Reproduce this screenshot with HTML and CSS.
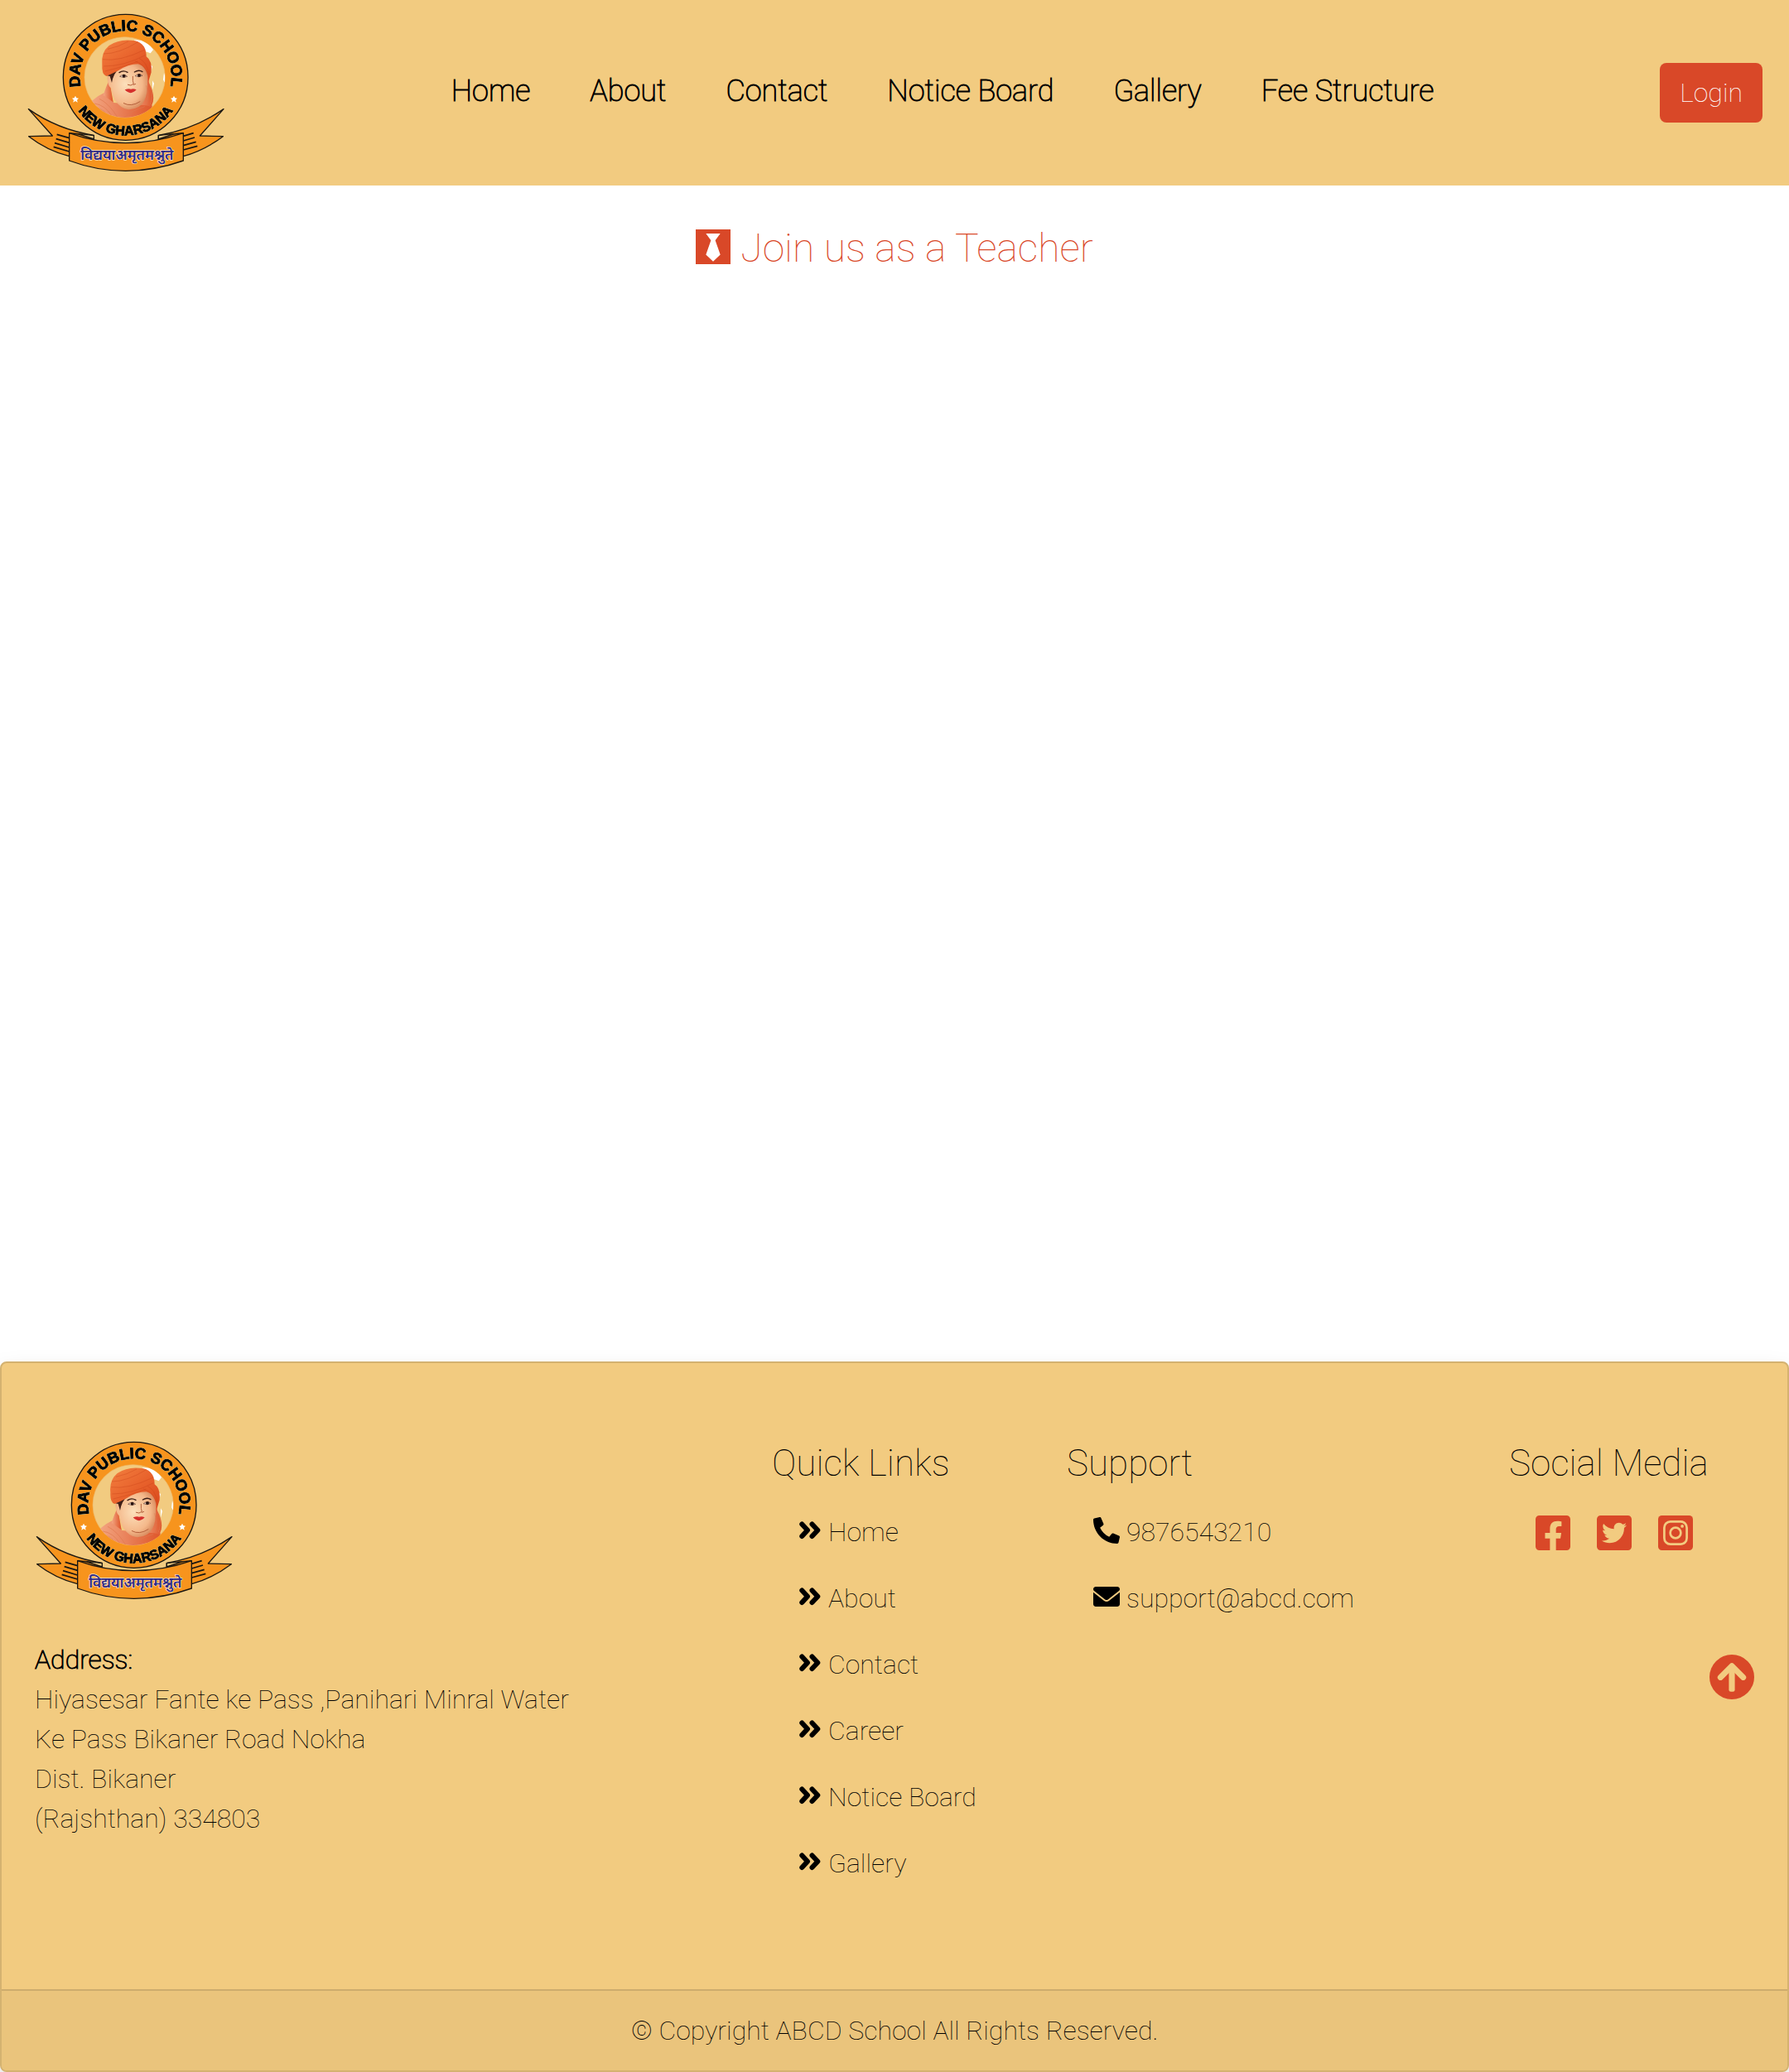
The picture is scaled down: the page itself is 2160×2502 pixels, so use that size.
FILE: index.html
```html
<!DOCTYPE html>
<html lang="en">
<head>
<meta charset="utf-8">
<meta name="viewport" content="width=device-width, initial-scale=1">
<title>ABCD School - Career</title>
<link rel="stylesheet" href="styles.css">
</head>
<body>
<header class="navbar">
  <a class="brand" href="#" aria-label="DAV Public School">
    <svg class="logo" viewBox="36 48 720 576">
      <defs>
        <linearGradient id="turban" x1="0" y1="0" x2="1" y2="1">
          <stop offset="0" stop-color="#f2803f"/><stop offset=".5" stop-color="#e8622c"/><stop offset="1" stop-color="#d9481c"/>
        </linearGradient>
        <radialGradient id="skin" cx=".45" cy=".45" r=".65">
          <stop offset="0" stop-color="#fce0bb"/><stop offset=".65" stop-color="#f4b88a"/><stop offset="1" stop-color="#cf7c50"/>
        </radialGradient>
        <linearGradient id="robe" x1="0" y1="0" x2="1" y2="0">
          <stop offset="0" stop-color="#f3a884"/><stop offset="1" stop-color="#dd5024"/>
        </linearGradient>
        <clipPath id="medallion"><circle cx="392" cy="280" r="146"/></clipPath>
        <path id="arc-top" d="M236 325A166 166 0 1 1 554 325"/>
        <path id="arc-bottom" d="M185 280A210 210 0 0 0 605 280"/>
      </defs>
      <g id="logo-art">
        <g fill="#f7941d" stroke="#1a1712" stroke-width="4" stroke-linejoin="round">
          <path d="M43 395Q150 470 280 490V505L191 566Q110 545 44 494L130 492Z"/>
          <path d="M750 395Q640 470 514 490V505L604 566Q680 545 748 494L664 492Z"/>
          <ellipse cx="395" cy="280" rx="226" ry="228"/>
          <path fill="#f2cb80" d="M191 482L225 486L280 504V491L250 487Z M604 482L568 486L514 504V491L545 487Z"/>
          <path d="M191 482Q290 518 395 518T604 482V582Q500 619 395 619T191 582Z"/>
        </g>
        <path fill="none" stroke="#1a1712" stroke-width="5" d="M146 487L191 500M143 503L191 517M138 518L191 534M134 532L191 549M641 482L604 493M645 498L604 510M650 514L604 527M655 529L604 543"/>
        <circle cx="392" cy="280" r="146" fill="#f2cb80" stroke="#eeb86a" stroke-width="2"/>
        <g clip-path="url(#medallion)">
          <path fill="#fff" d="M425 145Q470 140 495 180L485 193L465 185ZM480 230l12 10-6 24-8-12zM492 292l6 10-6 24zM534 264l3 10v25l-6-10z"/>
          <path fill="url(#robe)" d="M450 240Q475 250 480 300Q505 350 490 380L500 440H420Z"/>
          <path fill="url(#robe)" d="M262 375Q300 340 328 332L352 372L468 382Q505 385 510 440H262Z"/>
          <path fill="url(#robe)" d="M336 290Q325 310 314 345L350 370Z"/>
          <path fill="url(#skin)" d="M344 262Q322 270 330 295Q335 318 343 318Q346 345 356 362Q382 400 412 396Q450 392 462 365Q476 340 474 300V230H344Z"/>
          <path fill="#3f2018" d="M322 272L350 252L362 240L372 248Q350 266 345 300L338 276Z"/>
          <path fill="url(#turban)" d="M310 235Q305 190 335 165Q375 138 430 148Q470 158 470 205Q492 220 488 262L478 295Q474 240 440 232Q405 232 368 256Q345 268 325 276Q308 270 310 235Z"/>
          <path fill="none" stroke="#c8421a" stroke-opacity=".55" stroke-width="2" d="M312 215Q370 225 466 180M315 195Q370 195 440 152M316 240Q390 240 466 200M320 258Q385 244 440 222M330 178Q370 170 405 150M445 212Q472 225 480 270M430 222Q466 232 478 280"/>
          <path fill="none" stroke="#e07850" stroke-width="2" d="M282 375Q320 380 345 420M300 358Q335 375 365 424M275 385Q310 392 328 415M390 425Q420 398 465 386M470 310Q482 350 468 380M488 320Q496 350 484 378"/>
          <path fill="none" stroke="#3a1c14" stroke-width="4" stroke-linecap="round" d="M372 263Q386 253 402 262M427 261Q443 251 456 260"/>
          <path fill="#fff4e8" stroke="#5a2c1c" stroke-width="2" d="M374 277Q388 265 401 277Q388 284 374 277ZM430 275Q443 264 456 274Q443 282 430 275Z"/>
          <g fill="#2a1410"><circle cx="389" cy="275" r="6"/><circle cx="444" cy="273" r="6"/></g>
          <path fill="none" stroke="#b5603c" stroke-width="3" stroke-linecap="round" d="M421 277Q420 296 424 304Q414 313 403 307M424 307L431 304M388 374Q415 389 447 368"/>
          <path fill="#d52f2c" d="M392 325Q407 319 414 323Q423 319 434 325Q413 348 392 325Z"/>
        </g>
        <path fill="#fff" d="M213 347l4 8 8 1-6 6 2 9-8-5-8 5 2-9-6-6 8-1zM570 347l4 8 8 1-6 6 2 9-8-5-8 5 2-9-6-6 8-1z"/>
        <g class="logo-ring">
          <text font-size="56"><textPath href="#arc-top" startOffset="50%">DAV PUBLIC SCHOOL</textPath></text>
          <text font-size="48"><textPath href="#arc-bottom" startOffset="50%">NEW GHARSANA</textPath></text>
        </g>
        <text class="logo-motto" x="400" y="578" font-size="52">विद्ययाअमृतमश्नुते</text>
      </g>
    </svg>
  </a>
  <nav class="menu">
    <a href="#">Home</a>
    <a href="#">About</a>
    <a href="#">Contact</a>
    <a href="#">Notice Board</a>
    <a href="#">Gallery</a>
    <a href="#">Fee Structure</a>
  </nav>
  <button class="login" type="button">Login</button>
</header>

<main class="content">
  <h1 class="title">
    <svg class="icon-lg" viewBox="0 32 448 448" aria-hidden="true"><path fill="currentColor" d="M0 32v448h448V32H0zm316.500 325.200L224 445.900l-92.500-88.700 64.500-184-64.500-86.600h184.900L252 173.200l64.500 184z"/></svg>
    Join us as a Teacher
  </h1>
</main>

<footer class="footer">
  <div class="footer-body">
    <section class="about">
      <svg class="logo" viewBox="36 48 720 576" role="img" aria-label="DAV Public School"><use href="#logo-art"/></svg>
      <address><strong>Address:</strong><br>Hiyasesar Fante ke Pass ,Panihari Minral Water<br>Ke Pass Bikaner Road Nokha<br>Dist. Bikaner<br>(Rajshthan) 334803</address>
    </section>
    <section class="quick">
      <h2>Quick Links</h2>
      <ul>
        <li><a href="#"><svg class="icon-angle" viewBox="0 0 28 32" aria-hidden="true"><path id="angles" fill="none" stroke="currentColor" stroke-width="6" stroke-linecap="round" stroke-linejoin="round" d="M4.300 8.500L11 15.700L4.300 23M16.500 8.500L23.300 15.700L16.500 23"/></svg>Home</a></li>
        <li><a href="#"><svg class="icon-angle" viewBox="0 0 28 32" aria-hidden="true"><use href="#angles"/></svg>About</a></li>
        <li><a href="#"><svg class="icon-angle" viewBox="0 0 28 32" aria-hidden="true"><use href="#angles"/></svg>Contact</a></li>
        <li><a href="#"><svg class="icon-angle" viewBox="0 0 28 32" aria-hidden="true"><use href="#angles"/></svg>Career</a></li>
        <li><a href="#"><svg class="icon-angle" viewBox="0 0 28 32" aria-hidden="true"><use href="#angles"/></svg>Notice Board</a></li>
        <li><a href="#"><svg class="icon-angle" viewBox="0 0 28 32" aria-hidden="true"><use href="#angles"/></svg>Gallery</a></li>
      </ul>
    </section>
    <section class="support">
      <h2>Support</h2>
      <ul>
        <li><a href="tel:9876543210"><svg class="icon" viewBox="0 0 512 512" aria-hidden="true"><path fill="currentColor" d="M497.390 361.800l-112-48a24 24 0 0 0-28 6.900l-49.600 60.600A370.660 370.660 0 0 1 130.600 204.110l60.600-49.600a23.940 23.940 0 0 0 6.900-28l-48-112A24.160 24.160 0 0 0 122.600.610l-104 24A24 24 0 0 0 0 48c0 256.500 207.900 464 464 464a24 24 0 0 0 23.400-18.600l24-104a24.290 24.290 0 0 0-14.010-27.600z"/></svg>9876543210</a></li>
        <li><a href="mailto:support@abcd.com"><svg class="icon" viewBox="0 0 512 512" aria-hidden="true"><path fill="currentColor" d="M256 352c-16.530 0-33.060-5.422-47.160-16.410L0 173.200V400C0 426.500 21.490 448 48 448h416c26.510 0 48-21.490 48-48V173.200l-208.800 162.500C289.100 346.600 272.500 352 256 352zM16.290 145.300l212.200 165.100c16.190 12.600 38.870 12.600 55.060 0l212.200-165.100C505.100 137.300 512 125 512 112C512 85.490 490.500 64 464 64h-416C21.490 64 0 85.490 0 112C0 125 6.010 137.300 16.290 145.300z"/></svg>support@abcd.com</a></li>
      </ul>
    </section>
    <section class="social">
      <h2>Social Media</h2>
      <div class="social-links">
        <a href="#" aria-label="Facebook"><svg class="icon-lg" viewBox="0 32 448 448"><path fill="currentColor" d="M400 32H48A48 48 0 0 0 0 80v352a48 48 0 0 0 48 48h137.250V327.690h-63V256h63v-54.640c0-62.150 37-96.480 93.670-96.480 27.140 0 55.520 4.840 55.520 4.840v61h-31.270c-30.810 0-40.420 19.120-40.420 38.730V256h68.780l-11 71.690h-57.780V480H400a48 48 0 0 0 48-48V80a48 48 0 0 0-48-48z"/></svg></a>
        <a href="#" aria-label="Twitter"><svg class="icon-lg" viewBox="0 32 448 448"><path fill="currentColor" d="M400 32H48C21.500 32 0 53.500 0 80v352c0 26.500 21.500 48 48 48h352c26.500 0 48-21.500 48-48V80c0-26.500-21.500-48-48-48zm-48.900 158.800c.2 2.800.2 5.700.2 8.500 0 86.700-66 186.600-186.600 186.600-37.200 0-71.700-10.800-100.700-29.400 5.300.6 10.400.8 15.800.8 30.700 0 58.900-10.400 81.400-28-28.800-.6-53-19.500-61.300-45.500 10.100 1.500 19.200 1.500 29.600-1.200-30-6.100-52.500-32.500-52.500-64.400v-.8c8.700 4.900 18.900 7.900 29.600 8.300a65.447 65.447 0 0 1-29.200-54.600c0-12.200 3.200-23.400 8.900-33.100 32.300 39.800 80.800 65.800 135.200 68.600-9.300-44.500 24-80.600 64-80.600 18.900 0 35.900 7.900 47.900 20.700 14.800-2.800 29-8.300 41.600-15.800-4.900 15.200-15.200 28-28.800 36.100 13.200-1.400 26-5.100 37.800-10.200-8.900 13.100-20.100 24.700-32.900 34z"/></svg></a>
        <a href="#" aria-label="Instagram"><svg class="icon-lg" viewBox="0 0 448 448"><rect width="448" height="448" rx="48" fill="currentColor"/><g fill="none" stroke="#f2cb80" stroke-width="29"><rect x="79" y="79" width="290" height="290" rx="78"/><circle cx="224" cy="224" r="68"/></g><circle cx="310" cy="138" r="20" fill="#f2cb80"/></svg></a>
      </div>
    </section>
  </div>
  <div class="footer-bottom">© Copyright ABCD School All Rights Reserved.</div>
  <a class="to-top" href="#" aria-label="Back to top"><svg viewBox="0 0 512 512"><circle cx="256" cy="256" r="256" fill="currentColor"/><path fill="none" stroke="#f2cb80" stroke-width="66" stroke-linecap="round" stroke-linejoin="round" d="M126 260L256 130L386 260"/><rect x="222" y="140" width="68" height="284" rx="24" fill="#f2cb80"/></svg></a>
</footer>
</body>
</html>
```
FILE: styles.css
```css
* { box-sizing: border-box; }

body {
  margin: 0;
  min-height: 100vh;
  display: flex;
  flex-direction: column;
  background: #fff;
  color: #000;
  font: 100 32px/48px Roboto, "Liberation Sans", sans-serif;
}

a { color: inherit; text-decoration: none; }
h1, h2, ul { margin: 0; padding: 0; font-weight: 100; list-style: none; }
svg { display: block; flex: none; }
strong { font-weight: 100; -webkit-text-stroke: 1px currentColor; }

.logo { width: 240px; height: 192px; overflow: visible; }
.logo-ring {
  font-family: "Liberation Sans", sans-serif;
  font-weight: 700;
  line-height: 1;
  text-anchor: middle;
  fill: #000;
  stroke: #000;
  stroke-width: 3px;
  filter: drop-shadow(0 0 2px #fdf6b0) drop-shadow(0 0 2px #fdf6b0);
}
.logo-motto {
  font-family: "Noto Sans Devanagari", "Noto Sans", sans-serif;
  font-weight: 600;
  text-anchor: middle;
  fill: #2e2a86;
  stroke: #fbe3c8;
  stroke-width: 4px;
  paint-order: stroke;
}

.navbar {
  display: flex;
  align-items: center;
  justify-content: space-between;
  padding: 16px 32px;
  background: #f2cb80;
}
.menu {
  display: flex;
  gap: 72px;
  padding-bottom: 4px;
  font-size: 36px;
  -webkit-text-stroke: 1px currentColor;
}
.login {
  height: 72px;
  padding: 0 24px;
  border: 0;
  border-radius: 8px;
  background: #d94828;
  color: #fff;
  font: inherit;
}

.content { flex: 1; padding: 40px 32px; }
.title {
  display: flex;
  align-items: center;
  justify-content: center;
  gap: 12px;
  color: #d94828;
  font-size: 48px;
  line-height: 72px;
}
.icon-lg { width: 42px; height: 42px; }
.title .icon-lg, .footer li svg { margin-bottom: 4px; }

.footer {
  position: relative;
  border: 2px solid #d4b270;
  border-radius: 8px;
  background: #f2cb80;
  box-shadow: 0 16px 32px rgba(0, 0, 0, .15);
}
.footer-body {
  display: grid;
  grid-template-columns: repeat(12, 1fr);
  column-gap: 48px;
  padding: 94px 28px 112px 40px;
}
.about { grid-column: span 5; }
.about address { margin-top: 48px; font-style: normal; }
.quick, .social { grid-column: span 2; }
.support { grid-column: span 3; }
.footer h2 { font-size: 44px; line-height: 54px; margin-bottom: 16px; white-space: nowrap; }
.footer ul { padding-left: 32px; }
.footer li { padding: 16px 0; }
.footer li a { display: flex; align-items: center; gap: 8px; white-space: nowrap; }
.icon-angle { width: 28px; height: 32px; }
.icon { width: 32px; height: 32px; }
.social-links { display: flex; gap: 32px; padding: 20px 0 0 32px; color: #d94828; }

.footer-bottom {
  padding: 24px 32px;
  border-top: 2px solid #cdac6d;
  background: #eac47c;
  border-radius: 0 0 6px 6px;
  text-align: center;
}
.to-top { position: absolute; top: 352px; right: 40px; color: #d94828; }
.to-top svg { width: 54px; height: 54px; }
```
